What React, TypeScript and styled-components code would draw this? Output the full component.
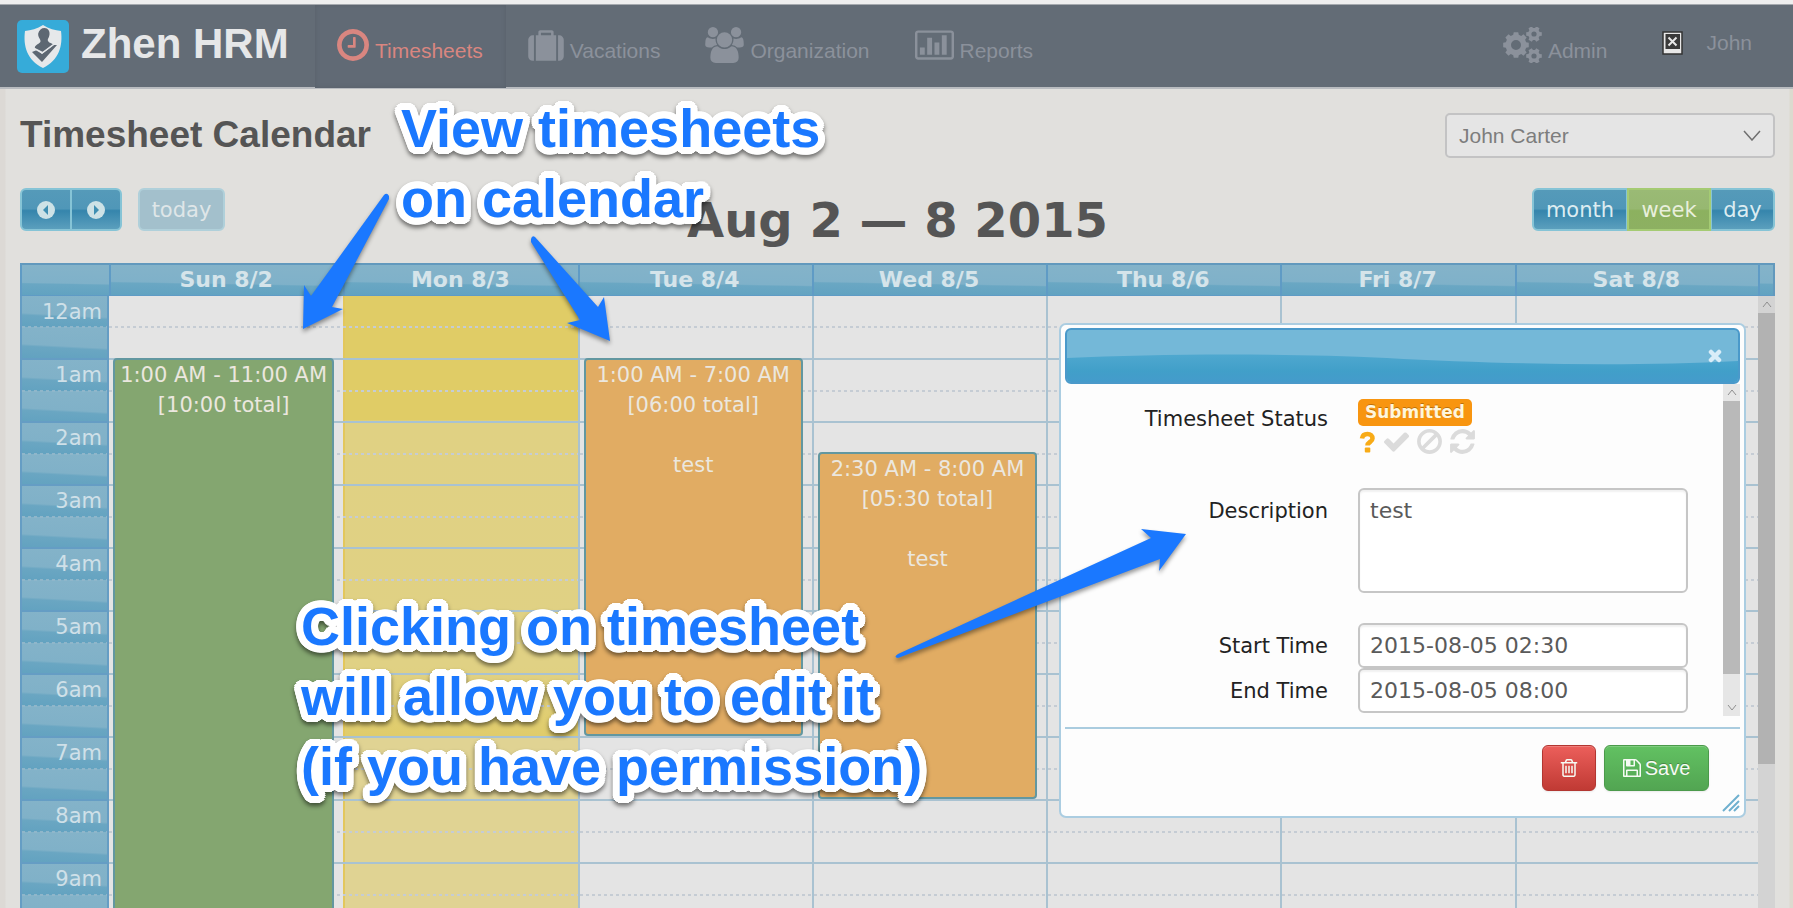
import React from "react";
import styled, { createGlobalStyle, css } from "styled-components";

const SANS = `"Liberation Sans", Arial, sans-serif`;
const WIDE = `"DejaVu Sans", Verdana, sans-serif`;

const GlobalStyle = createGlobalStyle`
  *, *::before, *::after { box-sizing: border-box; }
  body {
    margin: 0;
    background: #e1e0dd;
    font-family: ${WIDE};
    font-size: 21px;
  }
`;

/* ---------- icons ---------- */

const ICONS = {
  clock:
    "M1024 544v448q0 14-9 23t-23 9h-320q-14 0-23-9t-9-23v-64q0-14 9-23t23-9h224v-352q0-14 9-23t23-9h64q14 0 23 9t9 23zm416 352q0-148-73-273t-198-198-273-73-273 73-198 198-73 273 73 273 198 198 273 73 273-73 198-198 73-273zm224 0q0 209-103 385.5t-279.5 279.5-385.5 103-385.5-103-279.5-279.5-103-385.5 103-385.5 279.5-279.5 385.5-103 385.5 103 279.5 279.5 103 385.5z",
  suitcase:
    "M640 256h512v-128h-512v128zm-352 0v1280h-64q-92 0-158-66t-66-158v-832q0-92 66-158t158-66h64zm1120 0v1280h-1024v-1280h128v-160q0-40 28-68t68-28h576q40 0 68 28t28 68v160h128zm384 224v832q0 92-66 158t-158 66h-64v-1280h64q92 0 158 66t66 158z",
  users:
    "M529 896q-162 5-265 128h-134q-82 0-138-40.5t-56-118.5q0-353 124-353 6 0 43.5 21t97.5 42.5 119 21.5q67 0 133-23-5 37-5 66 0 139 81 256zm1071 637q0 120-73 189.5t-194 69.5h-874q-121 0-194-69.5t-73-189.5q0-53 3.5-103.5t14-109 26.5-108.5 43-97.5 62-81 85.5-53.5 111.5-20q10 0 43 21.5t73 48 107 48 135 21.5 135-21.5 107-48 73-48 43-21.5q61 0 111.5 20t85.5 53.5 62 81 43 97.5 26.5 108.5 14 109 3.5 103.5zm-1024-1277q0 106-75 181t-181 75-181-75-75-181 75-181 181-75 181 75 75 181zm704 384q0 159-112.5 271.5t-271.5 112.5-271.5-112.5-112.5-271.5 112.5-271.5 271.5-112.5 271.5 112.5 112.5 271.5zm576 225q0 78-56 118.5t-138 40.5h-134q-103-123-265-128 81-117 81-256 0-29-5-66 66 23 133 23 59 0 119-21.5t97.5-42.5 43.5-21q124 0 124 353zm-128-609q0 106-75 181t-181 75-181-75-75-181 75-181 181-75 181 75 75 181z",
  chart:
    "M160 128h1728q66 0 113 47t47 113v1216q0 66-47 113t-113 47h-1728q-66 0-113-47t-47-113v-1216q0-66 47-113t113-47zm0 128q-32 0-32 32v1216q0 32 32 32h1728q32 0 32-32v-1216q0-32-32-32zm96 768h256v384h-256zm384-512h256v896h-256zm384 256h256v640h-256zm384-384h256v1024h-256z",
  check:
    "M1671 566q0 40-28 68l-724 724-136 136q-28 28-68 28t-68-28l-136-136-362-362q-28-28-28-68t28-68l136-136q28-28 68-28t68 28l294 295 656-657q28-28 68-28t68 28l136 136q28 28 28 68z",
  ban: "M1440 893q0-161-87-295l-754 753q137 89 297 89 111 0 211.5-43.5t173.5-116.5 116-174.5 43-212.5zm-999 299l755-754q-135-91-300-91-148 0-273 73t-198 199-73 274q0 162 89 299zm1223-299q0 157-61 300t-163.5 246-245 164-298.5 61-298.5-61-245-164-163.5-246-61-300 61-299.5 163.5-245.5 245-164 298.5-61 298.5 61 245 164 163.5 245.5 61 299.5z",
  refresh:
    "M1639 1056q0 5-1 7-64 268-268 434.5t-478 166.5q-146 0-282.5-55t-243.5-157l-129 129q-19 19-45 19t-45-19-19-45v-448q0-26 19-45t45-19h448q26 0 45 19t19 45-19 45l-137 137q71 66 161 102t187 36q134 0 250-65t186-179q11-17 53-117 8-23 30-23h192q13 0 22.5 9.5t9.5 22.5zm25-800v448q0 26-19 45t-45 19h-448q-26 0-45-19t-19-45 19-45l138-138q-148-137-349-137-134 0-250 65t-186 179q-11 17-53 117-8 23-30 23h-199q-13 0-22.5-9.5t-9.5-22.5v-7q65-268 270-434.5t480-166.5q146 0 284 55.5t245 156.5l130-129q19-19 45-19t45 19 19 45z",
  trash:
    "M704 736v576q0 14-9 23t-23 9h-64q-14 0-23-9t-9-23v-576q0-14 9-23t23-9h64q14 0 23 9t9 23zm256 0v576q0 14-9 23t-23 9h-64q-14 0-23-9t-9-23v-576q0-14 9-23t23-9h64q14 0 23 9t9 23zm256 0v576q0 14-9 23t-23 9h-64q-14 0-23-9t-9-23v-576q0-14 9-23t23-9h64q14 0 23 9t9 23zm128 724v-948h-896v948q0 22 7 40.5t14.5 27 10.5 8.5h832q3 0 10.5-8.5t14.5-27 7-40.5zm-672-1076h448l-48-117q-7-9-17-11h-317q-10 2-17 11zm928 32v64q0 14-9 23t-23 9h-96v948q0 83-47 143.5t-113 60.5h-832q-66 0-113-58.5t-47-141.5v-952h-96q-14 0-23-9t-9-23v-64q0-14 9-23t23-9h309l70-167q15-37 54-63t79-26h320q40 0 79 26t54 63l70 167h309q14 0 23 9t9 23z",
  floppy:
    "M512 1536h768v-384h-768v384zm896 0h128v-896q0-14-10-38.5t-20-34.5l-281-281q-10-10-34-20t-39-10v416q0 40-28 68t-68 28h-576q-40 0-68-28t-28-68v-416h-128v1280h128v-416q0-40 28-68t68-28h832q40 0 68 28t28 68v416zm-384-928v-320q0-13-9.5-22.5t-22.5-9.5h-192q-13 0-22.5 9.5t-9.5 22.5v320q0 13 9.5 22.5t22.5 9.5h192q13 0 22.5-9.5t9.5-22.5zm640 32v928q0 40-28 68t-68 28h-1344q-40 0-68-28t-28-68v-1344q0-40 28-68t68-28h928q40 0 88 20t76 48l280 280q28 28 48 76t20 88z",
};

type IconName = keyof typeof ICONS;

const Svg = styled.svg`
  display: block;
  flex: none;
  fill: currentColor;
`;

function Icon({ name, box, w, h }: { name: IconName; box: string; w: number; h: number }) {
  return (
    <Svg viewBox={box} width={w} height={h} aria-hidden="true">
      <path d={ICONS[name]} fillRule={name === "chart" ? "evenodd" : "nonzero"} />
    </Svg>
  );
}

/* outline of a gear with square teeth around a round hole */
function gearPath(cx: number, cy: number, outer: number, inner: number, hole: number, teeth: number, turn = 0) {
  const step = (Math.PI * 2) / teeth;
  const pts: string[] = [];
  for (let i = 0; i < teeth; i++) {
    const a = i * step + turn;
    [
      [inner, -0.34],
      [outer, -0.22],
      [outer, 0.22],
      [inner, 0.34],
    ].forEach(([r, k]) => {
      pts.push(`${(cx + r * Math.cos(a + k * step)).toFixed(2)} ${(cy + r * Math.sin(a + k * step)).toFixed(2)}`);
    });
  }
  return `M${pts.join("L")}ZM${cx - hole} ${cy}a${hole} ${hole} 0 1 0 ${hole * 2} 0a${hole} ${hole} 0 1 0 ${-hole * 2} 0Z`;
}

function CogsIcon() {
  return (
    <Svg viewBox="0 0 39 36" width="39" height="36" fillRule="evenodd" aria-hidden="true">
      <path d={gearPath(13, 18, 13, 10.5, 5, 8)} />
      <path d={gearPath(31, 7, 8, 6, 2.6, 6)} />
      <path d={gearPath(31, 29, 8, 6, 2.6, 6)} />
    </Svg>
  );
}

function LogoMark() {
  return (
    <Svg viewBox="0 0 52 53" width="52" height="53" aria-hidden="true">
      <rect width="52" height="53" rx="5" fill="#36abd9" />
      <path d="M26 5c6 4 12 5 18 6 2 15-2 29-18 37C10 40 6 26 8 11c6-1 12-2 18-6z" fill="#e6e8ea" />
      <path
        d="M27.500 8c3.500 0 5.500 3 5 6.500-.3 2.500-1.500 4-1.800 5.500 .3 2.500 3.500 3 5.800 4.500L26 32l-8-4c-1-2 3.500-4 5-5.500 .8-1 .6-2-.2-3.500-1.200-2-1.800-3.500-1.600-5.500C22 10 24.500 8 27.500 8z"
        fill="#5d6772"
      />
      <path d="M15 32l5-2 5 4 12-9 3 0-15 17z" fill="#5d6772" />
      <path d="M17 28.500l8 4.500 12-9" fill="none" stroke="#e6e8ea" strokeWidth="1.200" />
    </Svg>
  );
}

/* ---------- navigation ---------- */

const Page = styled.div`
  position: relative;
  height: 100vh;
  display: flex;
  flex-direction: column;
  overflow: hidden;
  border-top: 4px solid #eeeeee;
  background: linear-gradient(90deg, #dcd9d5 0, #dcd9d5 5px, #e1e0dd 6px, #e1e0dd calc(100% - 4px), #dcdacf calc(100% - 3px));
`;

const NavBar = styled.nav`
  display: flex;
  align-items: stretch;
  flex: none;
  height: 85px;
  padding: 0 41px 0 17px;
  background: #636c76;
  border-top: 1px solid #a5a9ae;
  border-bottom: 2px solid #b9bcc0;
  font-family: ${SANS};
`;

const Brand = styled.a`
  display: flex;
  align-items: center;
  gap: 12px;
  width: 298px;
  color: #e6e7e8;
  font-size: 42px;
  font-weight: bold;
  line-height: 48px;
  text-decoration: none;
  white-space: nowrap;
`;

const BrandName = styled.span`
  padding-bottom: 4px;
`;

const NavItem = styled.a<{ $active?: boolean }>`
  display: flex;
  align-items: flex-end;
  gap: 6px;
  padding: 22px 23px 24px 22px;
  color: ${(p) => (p.$active ? "#d98680" : "#8b919b")};
  line-height: 24px;
  text-decoration: none;
  ${(p) =>
    p.$active &&
    css`
      margin-bottom: -1px;
      padding-bottom: 25px;
      background: #616a75;
      box-shadow: inset 0 0 4px #57606a;
    `}
`;

const NavIcon = styled.span`
  display: flex;
  align-items: center;
  height: 36px;
`;

const Spacer = styled.span`
  flex: 1;
`;

const UserLink = styled.a`
  display: flex;
  align-items: center;
  gap: 23px;
  padding: 0 0 6px 32px;
  color: #8b919b;
  text-decoration: none;
`;

/* ---------- page head and toolbar ---------- */

const Content = styled.main`
  display: flex;
  flex-direction: column;
  flex: 1;
  min-height: 0;
  padding: 24px 18px 0 20px;
`;

const HeadRow = styled.header`
  display: flex;
  align-items: center;
  justify-content: space-between;
  flex: none;
  height: 45px;
`;

const PageTitle = styled.h1`
  margin: 0;
  padding-bottom: 2px;
  color: #555555;
  font: bold 37px/42px ${SANS};
`;

const SelectWrap = styled.div`
  display: grid;
  width: 330px;
  align-items: center;
  & > * {
    grid-area: 1 / 1;
  }
  & > svg {
    justify-self: end;
    margin-right: 14px;
    pointer-events: none;
  }
`;

const PersonSelect = styled.select`
  appearance: none;
  width: 100%;
  height: 45px;
  padding: 0 12px;
  border: 2px solid #c3c3c4;
  border-radius: 5px;
  background: #e5e5e5;
  color: #7d7d7d;
  font: 21px/24px ${SANS};
`;

const Toolbar = styled.div`
  display: grid;
  grid-template-columns: 1fr auto 1fr;
  align-items: start;
  flex: none;
  height: 75px;
  margin-top: 30px;
`;

const RangeTitle = styled.h2`
  margin: 8px 0 0;
  color: #555555;
  font-size: 48px;
  font-weight: bold;
  line-height: 48px;
  white-space: nowrap;
`;

const ButtonGroup = styled.div<{ $end?: boolean }>`
  display: flex;
  justify-self: ${(p) => (p.$end ? "end" : "start")};
`;

const ToolButton = styled.button<{ $w: number; $tone?: "active" | "idle"; $first?: boolean; $last?: boolean }>`
  display: flex;
  align-items: center;
  justify-content: center;
  width: ${(p) => p.$w}px;
  height: 43px;
  padding: 1px 0 0;
  border: 2px solid #86c4d6;
  border-left-width: ${(p) => (p.$first ? 2 : 1)}px;
  border-right-width: ${(p) => (p.$last ? 2 : 1)}px;
  border-radius: ${(p) => `${p.$first ? 6 : 0}px ${p.$last ? 6 : 0}px ${p.$last ? 6 : 0}px ${p.$first ? 6 : 0}px`};
  background: linear-gradient(#559ab9 0, #5097b8 48%, #3585ac 53%, #5b9fbd 100%);
  color: #dcecf1;
  font: 21px/24px ${WIDE};
  ${(p) =>
    p.$tone === "active" &&
    css`
      border: 2px solid #a5cb73;
      background: linear-gradient(#9aba75 0, #97b871 48%, #8cb15f 53%, #8db062 100%);
      color: #e8efdc;
    `}
  ${(p) =>
    p.$tone === "idle" &&
    css`
      margin-left: 16px;
      border-color: #b0d0da;
      background: #a3c0cc;
      color: #dfe6e8;
    `}
`;

/* ---------- calendar ---------- */

const CalendarFrame = styled.section`
  display: grid;
  flex: 1;
  min-height: 0;
  grid-template-columns: minmax(0, 1fr);
  overflow: hidden;
  & > * {
    grid-area: 1 / 1;
  }
`;

const WeekTable = styled.table`
  display: block;
  border-spacing: 0;
  & > thead,
  & > tbody {
    display: block;
  }
`;

const Row = styled.tr`
  display: grid;
  grid-template-columns: 89px repeat(6, minmax(0, 234fr)) minmax(0, 243fr) 17px;
`;

const DayHead = styled.th`
  height: 33px;
  padding: 2px 2px 0 0;
  border: solid #5f9bc5;
  border-width: 2px 0 1px 2px;
  border-top-color: #6299bd;
  background: linear-gradient(181deg, #84b3c9 0, #7fb1c9 60%, #6aa7c3 64%, #61a2c1 100%);
  color: #d5e4ea;
  font-size: 22px;
  font-weight: bold;
  line-height: 26px;
  text-align: center;
  &:last-child {
    border-right: 2px solid #6299bd;
  }
`;

const TimeHead = styled.th<{ $first?: boolean }>`
  height: ${(p) => (p.$first ? 62 : 63)}px;
  padding: ${(p) => (p.$first ? 4 : 3)}px 5px 0 0;
  border: solid #659dc4;
  border-width: ${(p) => (p.$first ? 0 : 2)}px 2px 0 2px;
  background:
    linear-gradient(90deg, #8fb6ca 50%, transparent 50%) 0 30px / 6px 2px repeat-x,
    linear-gradient(183deg, #84b3c9 0, #80b1c8 60%, #6aa6c2 66%, #62a2c0 100%) 0 0 / 100% 31px repeat-y;
  color: #cfe0e8;
  font-weight: normal;
  line-height: 24px;
  text-align: right;
`;

const Slot = styled.td<{ $first?: boolean; $line?: boolean }>`
  position: relative;
  padding: 0;
  border: solid #a9c2d1;
  border-width: ${(p) => (p.$first ? 0 : 2)}px 0 0 ${(p) => (p.$line ? 2 : 0)}px;
  background: linear-gradient(90deg, #c5ccd4 50%, transparent 50%) 0 30px / 6px 2px repeat-x;
`;

const DayHighlight = styled.div`
  position: absolute;
  z-index: -1;
  top: 0;
  left: 0;
  right: 0;
  height: 640px;
  border-left: 2px solid #e3c75c;
  background: linear-gradient(
    #e0cc66 0,
    #e0cc66 124px,
    #e0d183 125px,
    #e0d184 370px,
    #e0cc6b 440px,
    #e0d393 441px
  );
`;

const Body = styled.tbody`
  position: relative;
  z-index: 0;
  height: 629px;
  overflow: hidden;
  background: #e4e4e4;
`;

const Event = styled.div<{ $color: string; $hours: number; $half?: boolean }>`
  position: absolute;
  z-index: 2;
  top: ${(p) => (p.$half ? 29 : -2)}px;
  left: 4px;
  right: 9px;
  height: ${(p) => Math.round(p.$hours * 63)}px;
  border: 2px solid #6297a0;
  border-radius: 4px;
  background: ${(p) => p.$color};
  color: #ebe7df;
  line-height: 30px;
  text-align: center;
  white-space: nowrap;
`;

const EventNote = styled.div`
  margin-top: 30px;
`;

const ScrollBar = styled.div<{ $tall?: boolean }>`
  position: relative;
  z-index: 1;
  display: flex;
  flex-direction: column;
  justify-self: end;
  width: 17px;
  margin-top: ${(p) => (p.$tall ? 33 : 0)}px;
  background: ${(p) => (p.$tall ? "#d3d3d3" : "#e6e6e6")};
  color: #8f8f8f;
`;

const ScrollArrow = styled.button`
  display: flex;
  align-items: center;
  justify-content: center;
  width: 17px;
  height: 17px;
  padding: 0;
  border: 0;
  background: transparent;
  color: inherit;
`;

const Thumb = styled.div<{ $h: number; $tone: string }>`
  flex: none;
  height: ${(p) => p.$h}px;
  background: ${(p) => p.$tone};
`;

function Chevron({ w, h, up, color = "currentColor", weight = 1 }: { w: number; h: number; up?: boolean; color?: string; weight?: number }) {
  return (
    <svg viewBox={`0 0 ${w} ${h}`} width={w} height={h} aria-hidden="true">
      <path d={up ? `M1 ${h - 1}L${w / 2} 1L${w - 1} ${h - 1}` : `M1 1L${w / 2} ${h - 1}L${w - 1} 1`} fill="none" stroke={color} strokeWidth={weight} />
    </svg>
  );
}

/* ---------- dialog ---------- */

const Dialog = styled.section`
  position: absolute;
  z-index: 3;
  top: 319px;
  right: 47px;
  width: 687px;
  padding: 3px 4px;
  border: 2px solid #abcde1;
  border-radius: 7px;
  background: #fdfdfd;
  color: #222222;
`;

const DialogBar = styled.header`
  display: grid;
  height: 56px;
  border: 2px solid #4a99ca;
  border-radius: 6px;
  background: #74b8d8;
  overflow: hidden;
  & > * {
    grid-area: 1 / 1;
  }
`;

const Wave = styled.svg`
  width: 100%;
  height: 52px;
`;

const CloseButton = styled.button`
  display: flex;
  align-items: center;
  justify-content: center;
  justify-self: end;
  align-self: center;
  width: 24px;
  height: 24px;
  margin-right: 11px;
  padding: 0;
  border: 0;
  background: transparent;
`;

const DialogBody = styled.div`
  display: grid;
  grid-template-columns: minmax(0, 1fr) 17px;
  height: 332px;
`;

const Form = styled.form`
  display: grid;
  grid-template-columns: 263px 330px;
  grid-template-rows: 89px 135px 45px 45px;
  column-gap: 30px;
  align-content: start;
  align-items: start;
  padding-top: 15px;
`;

const FieldLabel = styled.label`
  padding-top: 11px;
  line-height: 24px;
  text-align: right;
`;

const StatusLabel = styled.span`
  padding-top: 8px;
  line-height: 24px;
  text-align: right;
`;

const StatusBox = styled.div`
  display: flex;
  flex-direction: column;
  align-items: flex-start;
  gap: 1px;
`;

const Badge = styled.span`
  padding: 3px 7px;
  border-radius: 5px;
  background: #f89510;
  color: #fff6dc;
  font-size: 17px;
  font-weight: bold;
  line-height: 21px;
  text-shadow: 0 -1px 0 rgba(0, 0, 0, 0.25);
`;

const StatusActions = styled.div`
  display: flex;
  align-items: center;
  gap: 4px;
  height: 29px;
`;

const StatusButton = styled.button<{ $on?: boolean }>`
  display: flex;
  align-items: center;
  padding: 0;
  border: 0;
  background: transparent;
  color: ${(p) => (p.$on ? "#f8ab17" : "#dbdbdb")};
`;

const fieldStyle = css`
  display: block;
  width: 100%;
  margin: 0;
  padding: 8px 10px;
  border: 2px solid #c6c6c6;
  border-radius: 6px;
  background: #ffffff;
  box-shadow: inset 0 2px 2px rgba(0, 0, 0, 0.06);
  color: #5a5a5a;
  font: 22px/26px ${WIDE};
`;

const TextArea = styled.textarea`
  ${fieldStyle}
  height: 105px;
  resize: none;
`;

const TextField = styled.input`
  ${fieldStyle}
  height: 45px;
`;

const DialogFoot = styled.footer`
  display: flex;
  justify-content: flex-end;
  gap: 8px;
  height: 86px;
  margin-top: 11px;
  padding: 16px 31px 0 0;
  border-top: 2px solid #aaccdf;
`;

const ActionButton = styled.button<{ $danger?: boolean }>`
  display: flex;
  align-items: center;
  justify-content: center;
  gap: 4px;
  width: ${(p) => (p.$danger ? 54 : 105)}px;
  height: 46px;
  padding: 0;
  border: 1px solid ${(p) => (p.$danger ? "#b23631" : "#4b9a4b")};
  border-radius: 6px;
  background: ${(p) => (p.$danger ? "linear-gradient(#ec5f5b, #c03a34)" : "linear-gradient(#62c162, #52a552)")};
  box-shadow: inset 0 1px 0 rgba(255, 255, 255, 0.2), 0 1px 2px rgba(0, 0, 0, 0.08);
  color: #f6fbf4;
  font: 20px/24px ${SANS};
  text-shadow: 0 -1px 0 rgba(0, 0, 0, 0.25);
`;

const ResizeGrip = styled.svg`
  position: absolute;
  right: 4px;
  bottom: 4px;
`;

/* ---------- callouts drawn over the page ---------- */

const halo = [3, 5, 7]
  .flatMap((r) =>
    Array.from({ length: 24 }, (_, i) => {
      const a = (i / 24) * Math.PI * 2;
      return `${(Math.cos(a) * r).toFixed(1)}px ${(Math.sin(a) * r).toFixed(1)}px 0 #ffffff`;
    })
  )
  .join(", ");

const Callout = styled.p<{ $x: number; $y: number }>`
  position: absolute;
  z-index: 4;
  top: ${(p) => p.$y}px;
  left: ${(p) => p.$x}px;
  margin: 0;
  color: #1a78ff;
  font: bold 54px/70px ${SANS};
  text-shadow: ${halo};
  filter: drop-shadow(0 3px 2px rgba(0, 0, 0, 0.5));
  white-space: nowrap;
  pointer-events: none;
`;

const Arrow = styled.svg<{ $x: number; $y: number }>`
  position: absolute;
  z-index: 4;
  top: ${(p) => p.$y}px;
  left: ${(p) => p.$x}px;
  overflow: visible;
  fill: #1a78ff;
  filter: drop-shadow(0 3px 2px rgba(0, 0, 0, 0.4));
  pointer-events: none;
`;

/* ---------- data ---------- */

const DAYS = ["Sun 8/2", "Mon 8/3", "Tue 8/4", "Wed 8/5", "Thu 8/6", "Fri 8/7", "Sat 8/8"];
const HOURS = ["12am", "1am", "2am", "3am", "4am", "5am", "6am", "7am", "8am", "9am"];

const GREEN = "#84a670";
const ORANGE = "#e1ac63";

const EVENTS = [
  { day: 0, row: 1, hours: 10, half: false, color: GREEN, time: "1:00 AM - 11:00 AM", total: "[10:00 total]", note: "" },
  { day: 2, row: 1, hours: 6, half: false, color: ORANGE, time: "1:00 AM - 7:00 AM", total: "[06:00 total]", note: "test" },
  { day: 3, row: 2, hours: 5.5, half: true, color: ORANGE, time: "2:30 AM - 8:00 AM", total: "[05:30 total]", note: "test" },
];

const NAV: { label: string; icon: IconName; box: string; w: number; h: number; active?: boolean }[] = [
  { label: "Timesheets", icon: "clock", box: "128 128 1536 1536", w: 32, h: 32, active: true },
  { label: "Vacations", icon: "suitcase", box: "0 -64 1792 1664", w: 36, h: 33 },
  { label: "Organization", icon: "users", box: "-64 0 1920 1792", w: 39, h: 36 },
  { label: "Reports", icon: "chart", box: "0 128 2048 1536", w: 39, h: 32 },
];

function PageArrow({ back }: { back?: boolean }) {
  return (
    <svg viewBox="0 0 18 18" width="18" height="18" aria-hidden="true">
      <circle cx="9" cy="9" r="9" fill="#cde2e6" />
      <path d={back ? "M11 4v10L6 9z" : "M7 4v10l5-5z"} fill="#3f8fb2" />
    </svg>
  );
}

export default function App() {
  return (
    <Page>
      <GlobalStyle />
      <NavBar>
        <Brand href="#home">
          <LogoMark />
          <BrandName>Zhen HRM</BrandName>
        </Brand>
        {NAV.map((n) => (
          <NavItem key={n.label} href={`#${n.label.toLowerCase()}`} $active={n.active}>
            <NavIcon>
              <Icon name={n.icon} box={n.box} w={n.w} h={n.h} />
            </NavIcon>
            {n.label}
          </NavItem>
        ))}
        <Spacer />
        <NavItem href="#admin">
          <NavIcon>
            <CogsIcon />
          </NavIcon>
          Admin
        </NavItem>
        <UserLink href="#profile">
          <svg viewBox="0 0 21 24" width="21" height="24" aria-hidden="true">
            <rect x="1" y="1" width="19" height="22" fill="#e8e8e8" stroke="#333" strokeWidth="1.500" />
            <rect x="3.500" y="3" width="14.500" height="15" fill="#3a3a3a" />
            <path d="M6.500 6.500l8 8M14.500 6.500l-8 8" stroke="#e8e8e8" strokeWidth="2" />
          </svg>
          John
        </UserLink>
      </NavBar>

      <Content>
        <HeadRow>
          <PageTitle>Timesheet Calendar</PageTitle>
          <SelectWrap>
            <PersonSelect aria-label="Employee" defaultValue="John Carter">
              <option>John Carter</option>
            </PersonSelect>
            <Chevron w={18} h={11} color="#6f6f6f" weight={1.5} />
          </SelectWrap>
        </HeadRow>

        <Toolbar>
          <ButtonGroup>
            <ToolButton type="button" aria-label="Previous week" $w={51} $first>
              <PageArrow back />
            </ToolButton>
            <ToolButton type="button" aria-label="Next week" $w={51} $last>
              <PageArrow />
            </ToolButton>
            <ToolButton type="button" $w={87} $tone="idle" $first $last>
              today
            </ToolButton>
          </ButtonGroup>
          <RangeTitle>Aug 2 — 8 2015</RangeTitle>
          <ButtonGroup $end>
            <ToolButton type="button" $w={95} $first>
              month
            </ToolButton>
            <ToolButton type="button" $w={84} $tone="active">
              week
            </ToolButton>
            <ToolButton type="button" $w={64} $last>
              day
            </ToolButton>
          </ButtonGroup>
        </Toolbar>

        <CalendarFrame>
          <WeekTable>
            <thead>
              <Row>
                <DayHead aria-label="Time" />
                {DAYS.map((d) => (
                  <DayHead key={d} scope="col">
                    {d}
                  </DayHead>
                ))}
                <DayHead as="td" />
              </Row>
            </thead>
            <Body>
              {HOURS.map((hour, row) => (
                <Row key={hour}>
                  <TimeHead scope="row" $first={row === 0}>
                    {hour}
                  </TimeHead>
                  {DAYS.map((d, day) => (
                    <Slot key={d} $first={row === 0} $line={day > 1}>
                      {row === 0 && day === 1 && <DayHighlight />}
                      {EVENTS.filter((e) => e.day === day && e.row === row).map((e) => (
                        <Event key={e.time} $color={e.color} $hours={e.hours} $half={e.half}>
                          <div>{e.time}</div>
                          <div>{e.total}</div>
                          {e.note && <EventNote>{e.note}</EventNote>}
                        </Event>
                      ))}
                    </Slot>
                  ))}
                </Row>
              ))}
            </Body>
          </WeekTable>
          <ScrollBar $tall>
            <ScrollArrow type="button" aria-label="Scroll up">
              <Chevron w={10} h={7} up />
            </ScrollArrow>
            <Thumb $h={451} $tone="#b2b2b2" />
          </ScrollBar>
        </CalendarFrame>
      </Content>

      <Dialog role="dialog" aria-label="Edit timesheet">
        <DialogBar>
          <Wave viewBox="0 0 671 52" preserveAspectRatio="none" aria-hidden="true">
            <defs>
              <linearGradient id="deep" x1="0" y1="0" x2="0" y2="1">
                <stop offset="0" stopColor="#4fa8cf" />
                <stop offset="0.6" stopColor="#419fc9" />
                <stop offset="1" stopColor="#449bcb" />
              </linearGradient>
            </defs>
            <path d="M0 28C90 24 210 23 320 28C430 34 560 37 671 31V52H0z" fill="url(#deep)" />
          </Wave>
          <CloseButton type="button" aria-label="Close">
            <svg viewBox="0 0 14 14" width="14" height="14" aria-hidden="true">
              <path d="M3 3l8 8M11 3l-8 8" stroke="#d9edf8" strokeWidth="4.500" strokeLinecap="round" />
            </svg>
          </CloseButton>
        </DialogBar>

        <DialogBody>
          <Form id="timesheet-form">
            <StatusLabel>Timesheet Status</StatusLabel>
            <StatusBox>
              <Badge>Submitted</Badge>
              <StatusActions>
                <StatusButton type="button" $on aria-label="Submitted">
                  <svg viewBox="0 0 20 24" width="20" height="24" aria-hidden="true">
                    <path d="M4 8.500C4.500 5 6.500 4 9.500 4c3 0 5 1.700 5 4.500 0 3.500-5 3.500-5 7" fill="none" stroke="currentColor" strokeWidth="4.600" />
                    <rect x="6.800" y="17.500" width="5.500" height="5" rx="1" fill="currentColor" />
                  </svg>
                </StatusButton>
                <StatusButton type="button" aria-label="Approve">
                  <Icon name="check" box="0 0 1792 1792" w={29} h={29} />
                </StatusButton>
                <StatusButton type="button" aria-label="Reject">
                  <Icon name="ban" box="0 0 1792 1792" w={29} h={29} />
                </StatusButton>
                <StatusButton type="button" aria-label="Reset">
                  <Icon name="refresh" box="0 0 1792 1792" w={29} h={29} />
                </StatusButton>
              </StatusActions>
            </StatusBox>

            <FieldLabel htmlFor="description">Description</FieldLabel>
            <TextArea id="description" defaultValue="test" />

            <FieldLabel htmlFor="start">Start Time</FieldLabel>
            <TextField id="start" defaultValue="2015-08-05 02:30" />

            <FieldLabel htmlFor="end">End Time</FieldLabel>
            <TextField id="end" defaultValue="2015-08-05 08:00" />
          </Form>
          <ScrollBar>
            <ScrollArrow type="button" aria-label="Scroll form up">
              <Chevron w={10} h={7} up />
            </ScrollArrow>
            <Thumb $h={273} $tone="#b9b9b9" />
            <Spacer />
            <ScrollArrow type="button" aria-label="Scroll form down">
              <Chevron w={10} h={7} />
            </ScrollArrow>
          </ScrollBar>
        </DialogBody>

        <DialogFoot>
          <ActionButton type="button" $danger aria-label="Delete">
            <Icon name="trash" box="128 128 1536 1536" w={18} h={18} />
          </ActionButton>
          <ActionButton type="submit" form="timesheet-form">
            <Icon name="floppy" box="128 128 1536 1536" w={18} h={18} />
            Save
          </ActionButton>
        </DialogFoot>
        <ResizeGrip viewBox="0 0 18 18" width="18" height="18" aria-hidden="true">
          <path d="M1 17L17 1M7 17L17 7M12 17l5-5" stroke="#6fb0cf" strokeWidth="2" />
        </ResizeGrip>
      </Dialog>

      <Callout $x={401} $y={89}>
        View timesheets
        <br />
        on calendar
      </Callout>
      <Callout $x={301} $y={587}>
        Clicking on timesheet
        <br />
        will allow you to edit it
        <br />
        (if you have permission)
      </Callout>

      <Arrow $x={303} $y={187} width="90" height="140" aria-hidden="true">
        <path d="M81 4Q84 1 86 5L86 8L29 116L40 118L0 138L1 94L8 105Z" />
      </Arrow>
      <Arrow $x={530} $y={230} width="82" height="110" aria-hidden="true">
        <path d="M1 5Q2 1 5 3L68 73L74 63L80 107L37 89L50 86L1 8Z" />
      </Arrow>
      <Arrow $x={896} $y={525} width="290" height="130" aria-hidden="true">
        <path d="M2 125L255 9L245 0L290 5L263 42L264 30L2 129Q-3 128 2 125Z" />
      </Arrow>
    </Page>
  );
}
